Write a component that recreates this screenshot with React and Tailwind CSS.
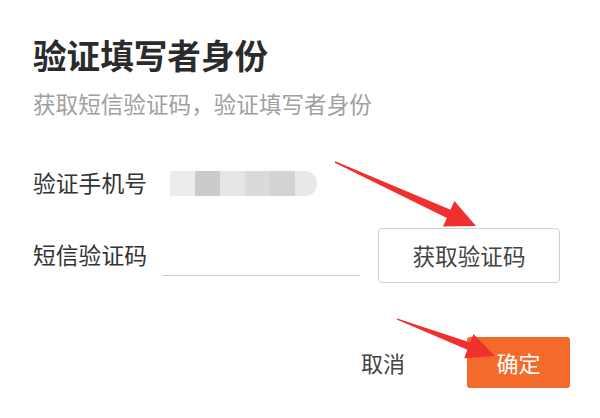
const blurBlocks = [
  { w: 'w-[25px]', c: 'bg-[#ececec]' },
  { w: 'w-[25px]', c: 'bg-[#cbcbcb]' },
  { w: 'w-[25px]', c: 'bg-[#e6e6e6]' },
  { w: 'w-[25px]', c: 'bg-[#dadada]' },
  { w: 'w-[25px]', c: 'bg-[#d3d3d3]' },
];

const Arrow = ({ points }) => <polygon points={points} fill="#f02f2f" />;

export default function App() {
  return (
    <div className="relative w-[600px] h-[418px] bg-white overflow-hidden font-['Noto_Sans_CJK_SC','Liberation_Sans',sans-serif]">
      <div className="flex flex-col px-[33px] pt-[35px]">
        {/* Header */}
        <h1 className="text-[33.6px] leading-[40px] font-bold text-[#2b2b2b]">验证填写者身份</h1>
        <p className="mt-[14px] text-[22.6px] leading-[30px] text-[#a0a0a0]">获取短信验证码，验证填写者身份</p>

        {/* Phone row */}
        <div className="mt-[49px] flex items-center h-[30px]">
          <span className="w-[130px] text-[22.8px] text-[#333]">验证手机号</span>
          <div className="ml-[7px] flex h-[25px]">
            {blurBlocks.map((b, i) => (
              <div key={i} className={`${b.w} h-full ${b.c}`} />
            ))}
            <div className="w-[22px] h-full bg-[#e8e8e8] rounded-r-[12px]" />
          </div>
        </div>

        {/* Code row */}
        <div className="mt-[30px] flex items-center h-[55px]">
          <span className="w-[130px] text-[22.8px] text-[#333]">短信验证码</span>
          <input className="w-[197px] h-[40px] border-b border-[#cccccc] outline-none text-[20px]" />
          <button className="ml-[18px] w-[182px] h-[55px] rounded-[4px] border border-[#cfcfcf] bg-white text-[22.6px] text-[#444]">
            获取验证码
          </button>
        </div>

        {/* Footer */}
        <div className="mt-[54px] -mr-[3px] flex items-center justify-end">
          <button className="text-[22px] text-[#444]">取消</button>
          <button className="ml-[62px] w-[103px] h-[51px] rounded-[3px] bg-[#f46a2b] text-[22px] text-white">
            确定
          </button>
        </div>
      </div>

      {/* Annotation arrows */}
      <svg className="absolute inset-0 pointer-events-none" width="600" height="418">
        <Arrow points="335.3,161.3 450.5,209.7 454.4,201 476,226 443,226.6 446.9,217.9 334.7,162.7" />
        <Arrow points="397.3,318.4 470.2,342.4 473.4,333.9 495,356 464.2,358.3 467.4,349.8 396.7,319.6" />
      </svg>
    </div>
  );
}
